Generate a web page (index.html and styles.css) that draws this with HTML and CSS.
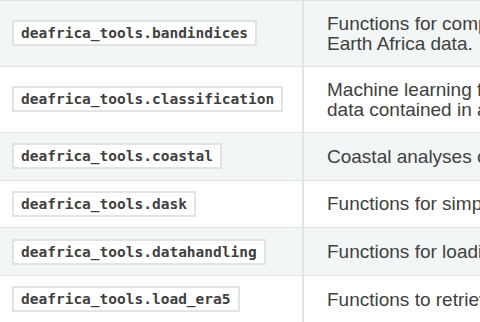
FILE: index.html
```html
<!DOCTYPE html>
<html lang="en">
<head>
  <meta charset="UTF-8" />
  <title>deafrica_tools modules</title>
  <link rel="stylesheet" href="styles.css">
</head>
<body>

<table class="modules">
  <tbody>
    <tr class="row-odd">
      <td class="name"><code class="xref">deafrica_tools.bandindices</code></td>
      <td class="desc">Functions for computing remote sensing band indices on Digital<br>Earth Africa data.</td>
    </tr>
    <tr class="row-even">
      <td class="name"><code class="xref">deafrica_tools.classification</code></td>
      <td class="desc">Machine learning functions for classifying remote sensing<br>data contained in an xarray.Dataset.</td>
    </tr>
    <tr class="row-odd">
      <td class="name"><code class="xref">deafrica_tools.coastal</code></td>
      <td class="desc">Coastal analyses on Digital Earth Africa data.</td>
    </tr>
    <tr class="row-even">
      <td class="name"><code class="xref">deafrica_tools.dask</code></td>
      <td class="desc">Functions for simplifying the creation of a local dask cluster.</td>
    </tr>
    <tr class="row-odd">
      <td class="name"><code class="xref">deafrica_tools.datahandling</code></td>
      <td class="desc">Functions for loading and handling Digital Earth Africa data.</td>
    </tr>
    <tr class="row-even">
      <td class="name"><code class="xref">deafrica_tools.load_era5</code></td>
      <td class="desc">Functions to retrieve ERA5 climate data.</td>
    </tr>
  </tbody>
</table>

</body>
</html>
```

FILE: styles.css
```css
body { margin: 0; padding: 0; background: #ffffff; font-family: "Liberation Sans", Arial, sans-serif; color: #404040; overflow: hidden; }
.modules { border-collapse: collapse; border-spacing: 0; border-top: 1px solid #e1e4e5; border-bottom: 1px solid #e1e4e5; }
.modules td { padding: 13px 12px; border-bottom: 1px solid #e1e4e5; vertical-align: middle; white-space: nowrap; font-size: 19px; line-height: 19.5px; }
.modules tr.row-odd td { background: #f3f6f6; }
.modules td.name { width: 278px; min-width: 278px; border-right: 2px solid #e1e4e5; }
.modules td.desc { padding-left: 23px; }
code.xref { font-family: "DejaVu Sans Mono", monospace; font-size: 14.5px; font-weight: 700; color: #404040; background: #ffffff; border: 2px solid #e1e4e5; padding: 3px 7px; vertical-align: middle; }
```
